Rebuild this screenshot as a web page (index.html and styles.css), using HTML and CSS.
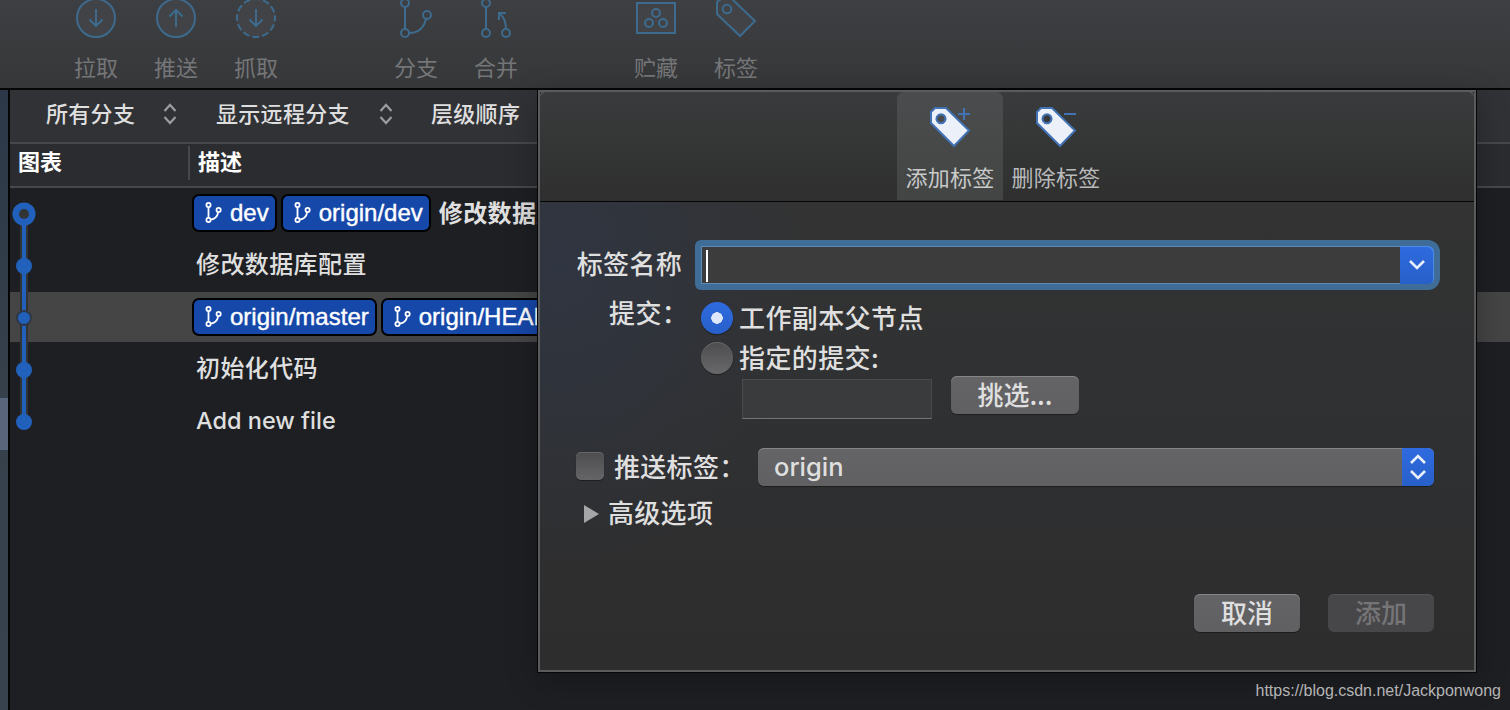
FILE: index.html
```html
<!DOCTYPE html>
<html lang="zh-CN">
<head>
  <meta charset="UTF-8" />
  <meta name="viewport" content="width=device-width, initial-scale=1.0" />
  <title>标签</title>
  <link rel="stylesheet" href="styles.css">
</head>
<body>
  <svg class="defs" width="0" height="0">
    <symbol id="branch" viewBox="0 0 17 21">
      <g fill="none" stroke="currentColor" stroke-width="1.8">
        <circle cx="3.5" cy="3" r="2.1" />
        <circle cx="3.5" cy="18" r="2.1" />
        <circle cx="13.6" cy="8" r="2.1" />
        <path d="M3.5 5v11M5.6 17.6c4.6-.6 6.9-3.3 7.6-7.5" />
      </g>
    </symbol>
  </svg>

  <div class="toolbar">
    <div class="tool">
      <svg width="44" height="44" viewBox="0 0 44 44"><circle class="disc" cx="22" cy="22" r="19" /><path d="M22 13v17M15.5 23.5L22 30l6.5-6.5" /></svg>
      <span>拉取</span>
    </div>
    <div class="tool">
      <svg width="44" height="44" viewBox="0 0 44 44"><circle class="disc" cx="22" cy="22" r="19" /><path d="M22 31V14M15.5 20.5L22 14l6.5 6.5" /></svg>
      <span>推送</span>
    </div>
    <div class="tool">
      <svg width="44" height="44" viewBox="0 0 44 44"><circle class="disc" cx="22" cy="22" r="19" stroke-dasharray="7 2.95" stroke-dashoffset="3.5" /><path d="M22 13v17M15.5 23.5L22 30l6.5-6.5" /></svg>
      <span>抓取</span>
    </div>
    <div class="tool gap">
      <svg width="44" height="44" viewBox="0 0 44 44"><circle cx="11" cy="7" r="4" /><circle cx="11" cy="37" r="4" /><circle cx="33" cy="19" r="4" /><path d="M11 11v22M15 37c10 0 15-6 17-14" /></svg>
      <span>分支</span>
    </div>
    <div class="tool">
      <svg width="44" height="44" viewBox="0 0 44 44"><circle cx="12" cy="7" r="4" /><circle cx="12" cy="37" r="4" /><circle cx="32" cy="37" r="4" /><path d="M12 11v22M32 33c0-7-2-12-6.5-15.500M25 24v-7h7" /></svg>
      <span>合并</span>
    </div>
    <div class="tool gap">
      <svg width="44" height="44" viewBox="0 0 44 44"><path class="disc" d="M3 7h38v30H3z" /><circle cx="22" cy="17" r="4" /><circle cx="15" cy="27" r="4" /><circle cx="29" cy="27" r="4" /></svg>
      <span>贮藏</span>
    </div>
    <div class="tool">
      <svg width="44" height="44" viewBox="0 0 44 44"><path class="disc" d="M3 6l4-3h11L41 25 26 40 3 18z" /><circle cx="13" cy="13" r="4.3" /></svg>
      <span>标签</span>
    </div>
  </div>

  <div class="main">
    <div class="sidebar"><div class="selected"></div></div>

    <div class="history">
      <div class="filters">
        <span class="filter all">所有分支</span>
        <svg class="updown" width="16" height="22" viewBox="0 0 16 22"><path d="M2.5 8L8 2l5.5 6M2.5 14L8 20l5.5-6" /></svg>
        <span class="filter remote">显示远程分支</span>
        <svg class="updown" width="16" height="22" viewBox="0 0 16 22"><path d="M2.5 8L8 2l5.5 6M2.5 14L8 20l5.5-6" /></svg>
        <span class="filter order">层级顺序</span>
      </div>
      <div class="header">
        <span class="col-graph">图表</span>
        <span class="col-desc">描述</span>
      </div>

      <div class="row">
        <svg class="graph" width="28" height="52" viewBox="0 0 28 52"><path class="edge" d="M14 26v26" /><path class="line" d="M14 26v26" /><circle class="head" cx="14" cy="26" r="8.3" /></svg>
        <div class="desc">
          <span class="ref"><svg width="17" height="21"><use href="#branch" /></svg>dev</span>
          <span class="ref"><svg width="17" height="21"><use href="#branch" /></svg>origin/dev</span>
          <b>修改数据库配置</b>
        </div>
      </div>
      <div class="row">
        <svg class="graph" width="28" height="52" viewBox="0 0 28 52"><path class="edge" d="M14 0v52" /><path class="line" d="M14 0v52" /><circle class="dot" cx="14" cy="26" r="8" /></svg>
        <div class="desc text">修改数据库配置</div>
      </div>
      <div class="row active">
        <svg class="graph" width="28" height="52" viewBox="0 0 28 52"><path class="edge" d="M14 0v52" /><path class="line" d="M14 0v52" /><circle class="dot current" cx="14" cy="26" r="7" /></svg>
        <div class="desc">
          <span class="ref"><svg width="17" height="21"><use href="#branch" /></svg>origin/master</span>
          <span class="ref"><svg width="17" height="21"><use href="#branch" /></svg>origin/HEAD</span>
        </div>
      </div>
      <div class="row">
        <svg class="graph" width="28" height="52" viewBox="0 0 28 52"><path class="edge" d="M14 0v52" /><path class="line" d="M14 0v52" /><circle class="dot" cx="14" cy="26" r="8" /></svg>
        <div class="desc text">初始化代码</div>
      </div>
      <div class="row">
        <svg class="graph" width="28" height="52" viewBox="0 0 28 52"><path class="edge" d="M14 0v26" /><path class="line" d="M14 0v26" /><circle class="dot" cx="14" cy="26" r="8" /></svg>
        <div class="desc text latin">Add new file</div>
      </div>
    </div>
  </div>

  <div class="dialog">
    <div class="tabs">
      <div class="tab on">
        <svg width="44" height="44" viewBox="0 0 44 44"><path class="tag" fill-rule="evenodd" d="M3 7l4-4h11L41 25.5 26 41 3 18zM13 9.300a4.500 4.500 0 1 0 .01 0z" /><path class="sign" d="M30 9h12M36 3v12" /></svg>
        <span>添加标签</span>
      </div>
      <div class="tab">
        <svg width="44" height="44" viewBox="0 0 44 44"><path class="tag" fill-rule="evenodd" d="M3 7l4-4h11L41 25.5 26 41 3 18zM13 9.300a4.500 4.500 0 1 0 .01 0z" /><path class="sign" d="M30 9h12" /></svg>
        <span>删除标签</span>
      </div>
    </div>

    <div class="form">
      <div class="line-name">
        <span class="label">标签名称</span>
        <div class="combo">
          <div class="field"><i class="caret"></i></div>
          <div class="drop"><svg width="18" height="12" viewBox="0 0 18 12"><path d="M2 2l7 7 7-7" /></svg></div>
        </div>
      </div>
      <div class="line-commit">
        <span class="label">提交：</span>
        <div class="options">
          <div class="option"><i class="radio checked"></i><span>工作副本父节点</span></div>
          <div class="option"><i class="radio"></i><span>指定的提交:</span></div>
          <div class="pick">
            <div class="commit-id"></div>
            <div class="button">挑选...</div>
          </div>
        </div>
      </div>
      <div class="line-push">
        <i class="checkbox"></i>
        <span class="push-label">推送标签：</span>
        <div class="select">
          <span>origin</span>
          <div class="arrows"><svg width="18" height="26" viewBox="0 0 18 26"><path d="M2 9l7-7 7 7M2 17l7 7 7-7" /></svg></div>
        </div>
      </div>
      <div class="line-more"><i class="triangle"></i>高级选项</div>
      <div class="actions">
        <div class="button">取消</div>
        <div class="button disabled">添加</div>
      </div>
    </div>
  </div>

  <div class="watermark">https://blog.csdn.net/Jackponwong</div>
</body>
</html>
```

FILE: styles.css
```css
* {
  box-sizing: border-box;
}
body {
  margin: 0;
  width: 1510px;
  height: 710px;
  overflow: hidden;
  position: relative;
  background: #1e1f23;
  color: #dfdfdf;
  font-family: "Noto Sans CJK SC", sans-serif;
  font-size: 22px;
  white-space: nowrap;
}
svg {
  display: block;
  flex: none;
}
.defs {
  position: absolute;
}
i {
  flex: none;
}

/* toolbar */
.toolbar {
  height: 90px;
  padding-left: 56px;
  display: flex;
  background: linear-gradient(#3e3f42, #363739);
  border-bottom: 2px solid #060607;
}
.tool {
  width: 80px;
  display: flex;
  flex-direction: column;
  align-items: center;
  color: #757678;
}
.tool.gap {
  margin-left: 80px;
}
.tool svg {
  margin-top: -4px;
  fill: none;
  stroke: #3d6b8e;
  stroke-width: 2;
}
.disc {
  fill: #414347;
}
.tool span {
  margin-top: 10px;
  line-height: 32px;
}

/* history */
.main {
  display: flex;
  height: 620px;
}
.sidebar {
  width: 10px;
  padding-top: 308px;
  background: linear-gradient(#2c3848, #36404b 300px, #38424f);
  border-right: 2px solid #050506;
}
.sidebar .selected {
  height: 52px;
  background: #58657b;
}
.history {
  flex: 1;
}
.filters {
  height: 54px;
  padding-bottom: 4px;
  display: flex;
  align-items: center;
  background: #313236;
  border-bottom: 2px solid #47484b;
}
.filter {
  padding-bottom: 4px;
  font-weight: 500;
  letter-spacing: 0.3px;
}
.all {
  width: 116px;
  margin-left: 36px;
}
.remote {
  width: 162px;
  margin-left: 38px;
}
.order {
  margin-left: 37px;
}
.updown {
  fill: none;
  stroke: #9b9c9e;
  stroke-width: 2.2;
}
.header {
  height: 44px;
  padding-top: 2px;
  display: flex;
  background: #2b2c30;
  border-bottom: 2px solid #47484b;
  color: #fff;
  font-weight: 700;
  line-height: 29px;
}
.col-graph {
  width: 180px;
  height: 34px;
  padding-left: 8px;
  border-right: 2px solid #47484b;
}
.col-desc {
  padding-left: 8px;
}
.row {
  height: 52px;
  display: flex;
}
.row.active {
  background: linear-gradient(#454545, #454545) 0 0 / 100% 50px no-repeat;
}
.edge {
  stroke: #333435;
  stroke-width: 8;
}
.line {
  stroke: #2160bb;
  stroke-width: 4;
}
.dot {
  fill: #2160bb;
}
.current {
  stroke: #2e3848;
  stroke-width: 2;
}
.head {
  fill: #333435;
  stroke: #2160bb;
  stroke-width: 6.5;
}
.desc {
  padding: 0 0 2px 154px;
  display: flex;
  align-items: center;
  font-size: 24px;
}
.desc.text {
  padding-left: 158px;
  padding-bottom: 7px;
  font-weight: 500;
  letter-spacing: 0.4px;
}
.desc b {
  margin-left: 4px;
  margin-top: -4px;
  letter-spacing: 0.4px;
}
.desc.latin {
  font-family: Inter, sans-serif;
  font-size: 23.5px;
  font-weight: 450;
  letter-spacing: 0;
  padding-bottom: 3px;
}
.ref {
  height: 38px;
  margin-right: 4px;
  padding: 0 6px 0 11px;
  display: flex;
  align-items: center;
  background: #1648aa;
  border: 2px solid #000;
  border-radius: 7px;
  color: #fff;
  font-family: "Liberation Sans", sans-serif;
  font-size: 24px;
  -webkit-text-stroke: 0.4px #fff;
}
.ref svg {
  margin-top: -1px;
  margin-right: 8px;
}

.dialog {
  position: absolute;
  left: 538px;
  top: 90px;
  width: 938px;
  height: 582px;
  border: 2px solid #5a5b5d;
  background:
    radial-gradient(ellipse 240px 300px at 20px 170px, rgba(47, 54, 70, 0.75), rgba(47, 54, 70, 0)),
    linear-gradient(#343434, #303132 50%, #2d2d2e);
  box-shadow: 0 0 0 1px #060606, 0 8px 30px rgba(0, 0, 0, 0.3);
}
.tabs {
  height: 110px;
  padding-left: 357px;
  display: flex;
  border-bottom: 1px solid #050505;
  border-radius: 7px 7px 0 0;
  background: linear-gradient(#3a3b3c, #2e2f2e);
  box-shadow: 0 -2px 0 #5a5b5d;
}
.tab {
  width: 106px;
  height: 108px;
  padding-top: 13px;
  display: flex;
  flex-direction: column;
  align-items: center;
  color: #b9babb;
}
.tab.on {
  background: linear-gradient(#4b4c4d, #434544);
  border-radius: 7px 7px 0 0;
  color: #c8c9c9;
}
.tab span {
  margin-top: 11px;
  letter-spacing: 0.3px;
  line-height: 32px;
}
.tag {
  fill: #ebf0f9;
  stroke: #4272b4;
  stroke-width: 2;
}
.sign {
  fill: none;
  stroke: #4272b4;
  stroke-width: 2;
}
.form {
  padding: 38px 40px 0 0;
  font-size: 26px;
  font-weight: 500;
  line-height: 38px;
}
.line-name,
.line-commit,
.line-push,
.line-more,
.actions {
  display: flex;
}
.label {
  width: 142px;
  letter-spacing: 0.3px;
  text-align: right;
}
.line-name .label {
  padding-top: 4px;
}
.combo {
  width: 745px;
  height: 50px;
  margin-left: 13px;
  margin-right: -6px;
  padding: 6px;
  display: flex;
  background: #3f6d98;
  border-radius: 6px 12px 12px 6px;
}
.field {
  flex: 1;
  padding: 3px 4px;
  background: #3c3c3d;
  border: 1px solid #5b8bb5;
  border-right: 0;
}
.caret {
  display: block;
  width: 2px;
  height: 32px;
  background: #fff;
}
.drop,
.arrows {
  display: flex;
  align-items: center;
  justify-content: center;
  background: linear-gradient(#2f6be0, #2860c9);
  border-radius: 0 6px 6px 0;
}
.drop {
  width: 34px;
  box-shadow: inset -1px 1px 0 #4b8ce6;
}
.arrows {
  width: 32px;
}
.drop path,
.arrows path {
  fill: none;
  stroke: #e9effb;
  stroke-width: 2.6;
}
.line-commit .label {
  width: 148px;
  padding-top: 3px;
}
.options {
  margin-left: 13px;
  padding-top: 8px;
}
.option {
  height: 40px;
  display: flex;
  align-items: center;
  letter-spacing: 0.4px;
}
.option span {
  padding-bottom: 2px;
}
.radio {
  width: 32px;
  height: 32px;
  margin-right: 6px;
  border-radius: 50%;
  background: linear-gradient(#4d4d4f, #68686a);
  box-shadow: 0 1px 1px rgba(0, 0, 0, 0.4), inset 0 1px 0 #666;
}
.radio.checked {
  background: radial-gradient(circle, #dfe8fa 5.5px, transparent 6px), linear-gradient(#2f6be0, #2860c9);
  box-shadow: 0 1px 1px rgba(0, 0, 0, 0.4);
}
.pick {
  margin: -2px 0 0 41px;
  display: flex;
  align-items: flex-start;
}
.commit-id {
  width: 190px;
  height: 40px;
  margin: 3px 19px 0 0;
  background: #3a3b3c;
  border: 1px solid #4a4b4c;
  border-bottom-color: #737475;
}
.button {
  width: 106px;
  height: 38px;
  border-radius: 6px;
  background: linear-gradient(#646466, #606062);
  box-shadow: inset 0 1px 0 #858586, 0 1px 1px rgba(0, 0, 0, 0.4);
  text-align: center;
  line-height: 36px;
}
.pick .button {
  width: 128px;
}
.button.disabled {
  background: #474749;
  box-shadow: inset 0 1px 0 #545456;
  color: #757577;
}
.line-push {
  margin-top: 29px;
  padding-left: 36px;
}
.checkbox {
  width: 28px;
  height: 28px;
  margin: 4px 10px 0 0;
  border-radius: 5px;
  background: linear-gradient(#4d4d4f, #656567);
  box-shadow: 0 1px 1px rgba(0, 0, 0, 0.4), inset 0 1px 0 #666;
}
.push-label {
  width: 130px;
  letter-spacing: 0.3px;
  line-height: 36px;
}
.select {
  flex: 1;
  height: 38px;
  margin-left: 14px;
  padding-left: 16px;
  display: flex;
  justify-content: space-between;
  border-radius: 6px;
  background: linear-gradient(#656567, #606062);
  box-shadow: inset 0 1px 0 #858586, 0 1px 1px rgba(0, 0, 0, 0.4);
  font-family: Inter, sans-serif;
  font-size: 25.5px;
  font-weight: 450;
}
.line-more {
  margin-top: 8px;
  padding-left: 44px;
  letter-spacing: 0.3px;
  line-height: 36px;
}
.triangle {
  width: 15px;
  height: 18px;
  margin: 11px 9px 0 0;
  background: #a5a6a7;
  clip-path: polygon(0 0, 100% 50%, 0 100%);
}
.actions {
  margin-top: 64px;
  justify-content: flex-end;
  gap: 28px;
}

.watermark {
  position: absolute;
  right: 9px;
  bottom: 10px;
  color: #b4b4b5;
  font-family: "Liberation Sans", sans-serif;
  font-size: 16px;
  line-height: 18px;
}
```
